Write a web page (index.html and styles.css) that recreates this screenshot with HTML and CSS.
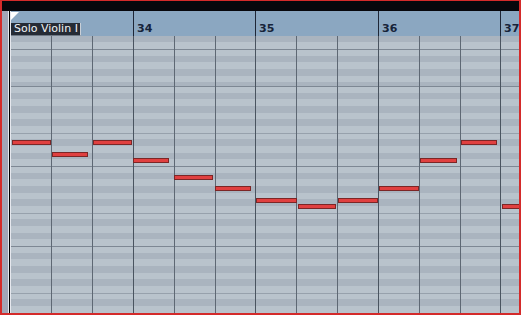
FILE: index.html
```html
<!DOCTYPE html>
<html lang="en">
<head>
    <meta charset="UTF-8">
    <title>Key Editor</title>
    <link rel="stylesheet" href="styles.css">
</head>
<body>
    <div class="frame">
        <div class="topbar"></div>
        <div class="main">
            <div class="side"></div>
            <div class="edge"></div>
            <div class="editor">
                <div class="ruler">
                    <div class="bar first"></div>
                    <div class="bar">34</div>
                    <div class="bar wide">35</div>
                    <div class="bar">36</div>
                    <div class="bar last">37</div>
                    <!-- part start marker and name -->
                    <div class="part-start"></div>
                    <div class="part-name">Solo Violin I</div>
                </div>
                <div class="grid">
                    <div class="beat"></div>
                    <div class="beat"></div>
                    <div class="beat bar-end"></div>
                    <div class="beat"></div>
                    <div class="beat"></div>
                    <div class="beat bar-end narrow"></div>
                    <div class="beat"></div>
                    <div class="beat"></div>
                    <div class="beat bar-end"></div>
                    <div class="beat"></div>
                    <div class="beat"></div>
                    <div class="beat bar-end narrow"></div>
                    <div class="beat rest"></div>

                    <div class="note" style="left: 1px; top: 104px; width: 39px;"></div>
                    <div class="note" style="left: 41px; top: 116px; width: 36px;"></div>
                    <div class="note" style="left: 82px; top: 104px; width: 39px;"></div>
                    <div class="note" style="left: 122px; top: 122px; width: 36px;"></div>
                    <div class="note" style="left: 163px; top: 139px; width: 39px;"></div>
                    <div class="note" style="left: 204px; top: 150px; width: 36px;"></div>
                    <div class="note" style="left: 245px; top: 162px; width: 41px;"></div>
                    <div class="note" style="left: 287px; top: 168px; width: 38px;"></div>
                    <div class="note" style="left: 327px; top: 162px; width: 40px;"></div>
                    <div class="note" style="left: 368px; top: 150px; width: 40px;"></div>
                    <div class="note" style="left: 409px; top: 122px; width: 37px;"></div>
                    <div class="note" style="left: 450px; top: 104px; width: 36px;"></div>
                    <div class="note" style="left: 491px; top: 168px; width: 20px;"></div>
                </div>
            </div>
        </div>
    </div>
</body>
</html>
```

FILE: styles.css
```css
* {
    box-sizing: border-box;
}
body {
    margin: 0;
    background-color: #fff;
    font-family: "DejaVu Sans", sans-serif;
}
.frame {
    width: 521px;
    height: 315px;
    border: 2px solid #d42a2a;
    border-top-width: 1px;
    display: flex;
    flex-direction: column;
    overflow: hidden;
}
.topbar {
    height: 10px;
    background-color: #07070c;
    flex-shrink: 0;
}
.main {
    flex: 1;
    display: flex;
    min-height: 0;
}
.side {
    width: 6px;
    flex-shrink: 0;
    background-color: #a2a5b7;
}
.edge {
    width: 3px;
    flex-shrink: 0;
    border-left: 1px solid #e6e8ee;
    border-right: 1px solid #e6e8ee;
    background-color: #000;
}
.editor {
    flex: 1;
    min-width: 0;
    display: flex;
    flex-direction: column;
}
/* Ruler */
.ruler {
    position: relative;
    height: 25px;
    flex-shrink: 0;
    display: flex;
    background-color: #8ba7c1;
}
.bar {
    width: 122px;
    flex-shrink: 0;
    border-left: 1px solid #1e2636;
    padding: 11px 0 0 3px;
    line-height: 13px;
    font-size: 11px;
    font-weight: bold;
    color: #16233a;
}
.bar.first {
    border-left: none;
    padding: 0;
}
.bar.wide {
    width: 123px;
}
.bar.last {
    flex: 1;
    min-width: 0;
    overflow: hidden;
}
.part-start {
    position: absolute;
    left: 0;
    top: 1px;
    width: 0;
    height: 0;
    border-top: 8px solid #fff;
    border-right: 8px solid transparent;
}
.part-name {
    position: absolute;
    left: 0;
    top: 12px;
    width: 70px;
    height: 13px;
    padding-left: 3px;
    background-color: #252b35;
    border-right: 1px solid #c9d0d8;
    border-bottom: 1px solid #6f7a86;
    color: #f2f4f6;
    font-size: 11px;
    line-height: 12px;
    white-space: nowrap;
}
/* Note grid */
.grid {
    position: relative;
    flex: 1;
    display: flex;
    background-color: #b9c3cc;
    background-image: repeating-linear-gradient(to bottom,
        #7e8894 0, #7e8894 1px,
        #b9c3cc 1px, #b9c3cc 6.67px,
        #aab4bf 6.67px, #aab4bf 13.33px,
        #b9c3cc 13.33px, #b9c3cc 20px,
        #aab4bf 20px, #aab4bf 26.67px,
        #b9c3cc 26.67px, #b9c3cc 33.33px,
        #aab4bf 33.33px, #aab4bf 40px,
        #b9c3cc 40px, #b9c3cc 46.67px,
        #97a1ac 46.67px, #97a1ac 47.67px,
        #b9c3cc 47.67px, #b9c3cc 53.33px,
        #aab4bf 53.33px, #aab4bf 60px,
        #b9c3cc 60px, #b9c3cc 66.67px,
        #aab4bf 66.67px, #aab4bf 73.33px,
        #b9c3cc 73.33px, #b9c3cc 80px);
    background-position: 0 50px;
}
.beat {
    width: 41px;
    flex-shrink: 0;
    border-right: 1px solid #5e6874;
}
.beat.narrow {
    width: 40px;
}
.beat.bar-end {
    border-right-color: #4a5460;
}
.beat.rest {
    flex: 1;
    border-right: none;
}
.note {
    position: absolute;
    height: 5px;
    background-color: #e04040;
    border: 1px solid #7c2626;
}
```
